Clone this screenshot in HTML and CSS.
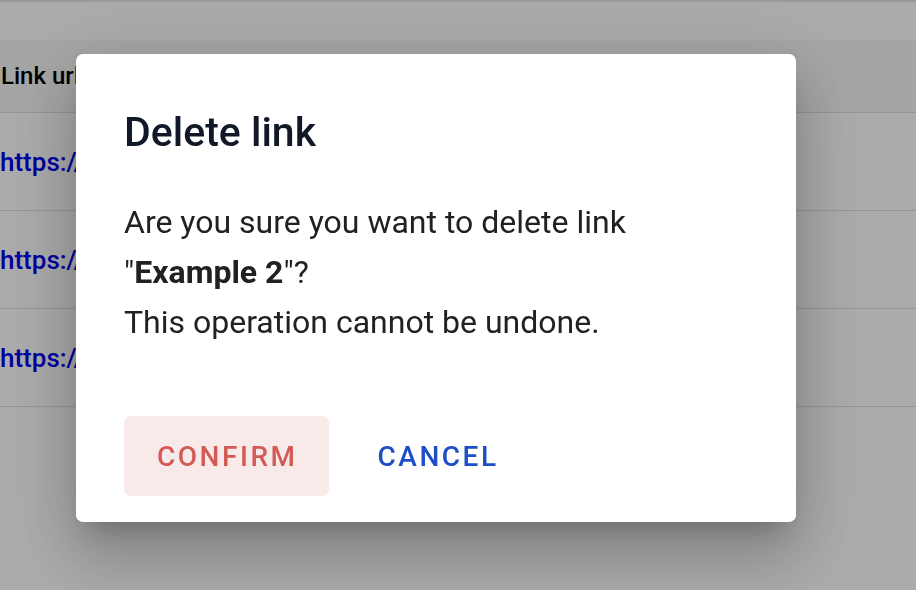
FILE: index.html
```html
<!DOCTYPE html>
<html>
<head>
<meta charset="utf-8">
<link rel="stylesheet" href="styles.css">
</head>
<body>
<div class="page">
  <div class="topline"></div>
  <div class="band"></div>
  <div class="table">
    <div class="thead">Link url</div>
    <div class="row"><a class="link">https://example.com/1</a></div>
    <div class="row"><a class="link">https://example.com/2</a></div>
    <div class="row"><a class="link">https://example.com/3</a></div>
  </div>
</div>
<div class="overlay">
  <div class="dialog">
    <h2 class="title">Delete link</h2>
    <div class="content">
      <p class="text">Are you sure you want to delete link "<b>Example 2</b>"?<br>This operation cannot be undone.</p>
    </div>
    <div class="actions">
      <button class="btn btn-confirm">Confirm</button>
      <button class="btn btn-cancel">Cancel</button>
    </div>
  </div>
</div>
</body>
</html>
```
FILE: styles.css
```css
html, body {
  margin: 0;
  padding: 0;
  height: 100%;
  overflow: hidden;
}
body {
  font-family: Roboto, "Liberation Sans", sans-serif;
  background: #ffffff;
}
.page {
  display: flex;
  flex-direction: column;
}
.topline {
  height: 2px;
  background: #e5e5e5;
}
.band {
  height: 38px;
  background: #ffffff;
}
.table {
  display: flex;
  flex-direction: column;
}
.thead {
  height: 72px;
  border-bottom: 1px solid #e0e0e0;
  background: #f7f7f7;
  display: flex;
  align-items: center;
  padding-left: 1px;
  font-size: 24px;
  font-weight: 500;
  color: #000;
  white-space: nowrap;
}
.row {
  height: 97px;
  border-bottom: 1px solid #e0e0e0;
  display: flex;
  align-items: center;
  white-space: nowrap;
}
.link {
  font-size: 26px;
  font-weight: 500;
  color: #0000ee;
}
.overlay {
  position: fixed;
  inset: 0;
  background: rgba(0, 0, 0, 0.33);
}
.dialog {
  position: absolute;
  left: 76px;
  top: 54px;
  width: 720px;
  height: 468px;
  box-sizing: border-box;
  background: #fff;
  border-radius: 7px;
  box-shadow: 0 17px 24px -11px rgba(0,0,0,0.2), 0 38px 60px 5px rgba(0,0,0,0.14), 0 14px 72px 12px rgba(0,0,0,0.12);
  padding: 54px 48px 26px;
  display: flex;
  flex-direction: column;
}
.title {
  margin: 0;
  font-size: 41px;
  font-weight: 500;
  line-height: 48px;
  color: #111827;
}
.content {
  margin-top: 41px;
  flex: 1;
}
.text {
  margin: 0;
  font-size: 32px;
  line-height: 50px;
  color: #212121;
}
.text b {
  font-weight: 700;
}
.actions {
  display: flex;
  gap: 16px;
}
.btn {
  font-family: Roboto, "Liberation Sans", sans-serif;
  font-size: 28px;
  font-weight: 500;
  letter-spacing: 0.09em;
  text-transform: uppercase;
  border: none;
  border-radius: 7px;
  height: 80px;
  padding: 0 31px 0 33px;
  background: transparent;
  cursor: pointer;
}
.btn-confirm {
  background: #f9eaea;
  color: #d45a55;
}
.btn-cancel {
  color: #1e4fc9;
}
```
